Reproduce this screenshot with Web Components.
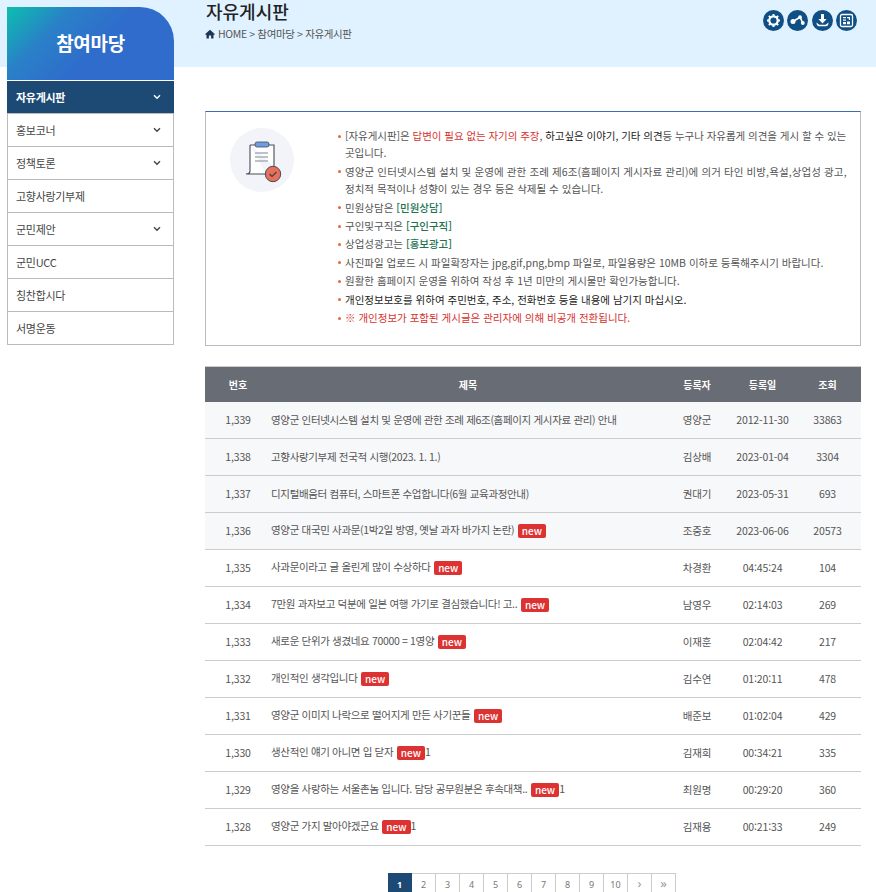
<!DOCTYPE html>
<html lang="ko">
<head>
<meta charset="utf-8">
<title>자유게시판</title>
<style>
  html, body { margin: 0; height: 892px; overflow: hidden; background: #fff; }
  body { font-family: "Noto Sans CJK KR", "Noto Sans", sans-serif; color: #444; }
</style>
</head>
<body>
<board-page>
  <side-menu slot="side" heading="참여마당">
    <side-item active arrow>자유게시판</side-item>
    <side-item arrow>홍보코너</side-item>
    <side-item arrow>정책토론</side-item>
    <side-item>고향사랑기부제</side-item>
    <side-item arrow>군민제안</side-item>
    <side-item>군민UCC</side-item>
    <side-item>칭찬합시다</side-item>
    <side-item>서명운동</side-item>
  </side-menu>

  <page-head heading="자유게시판" trail="HOME > 참여마당 > 자유게시판"></page-head>

  <notice-box>
    <li style="letter-spacing: -0.05px">[자유게시판]은 <span class="r">답변이 필요 없는 자기의 주장</span>, <span class="k">하고싶은 이야기, 기타 의견</span>등 누구나 자유롭게 의견을 게시 할 수 있는 곳입니다.</li>
    <li><span style="letter-spacing: 0.11px">영양군 인터넷시스템 설치 및 운영에 관한 조례 제6조(홈페이지 게시자료 관리)에 의거 타인 비방,욕설,상업성 광고,</span> 정치적 목적이나 성향이 있는 경우 등은 삭제될 수 있습니다.</li>
    <li>민원상담은 <span class="g">[민원상담]</span></li>
    <li>구인및구직은 <span class="g">[구인구직]</span></li>
    <li>상업성광고는 <span class="g">[홍보광고]</span></li>
    <li>사진파일 업로드 시 파일확장자는 jpg,gif,png,bmp 파일로, 파일용량은 10MB 이하로 등록해주시기 바랍니다.</li>
    <li>원활한 홈페이지 운영을 위하여 작성 후 1년 미만의 게시물만 확인가능합니다.</li>
    <li class="k">개인정보보호를 위하여 주민번호, 주소, 전화번호 등을 내용에 남기지 마십시오.</li>
    <li class="r">※ 개인정보가 포함된 게시글은 관리자에 의해 비공개 전환됩니다.</li>
  </notice-box>

  <board-table>
    <board-row notice no="1,339" who="영양군" day="2012-11-30" hits="33863">영양군 인터넷시스템 설치 및 운영에 관한 조례 제6조(홈페이지 게시자료 관리) 안내</board-row>
    <board-row notice no="1,338" who="김상배" day="2023-01-04" hits="3304">고향사랑기부제 전국적 시행(2023. 1. 1.)</board-row>
    <board-row notice no="1,337" who="권대기" day="2023-05-31" hits="693">디지털배움터 컴퓨터, 스마트폰 수업합니다(6월 교육과정안내)</board-row>
    <board-row notice no="1,336" who="조중호" day="2023-06-06" hits="20573">영양군 대국민 사과문(1박2일 방영, 옛날 과자 바가지 논란) <new-tag></new-tag></board-row>
    <board-row no="1,335" who="차경환" day="04:45:24" hits="104">사과문이라고 글 올린게 많이 수상하다 <new-tag></new-tag></board-row>
    <board-row no="1,334" who="남영우" day="02:14:03" hits="269">7만원 과자보고 덕분에 일본 여행 가기로 결심했습니다! 고.. <new-tag></new-tag></board-row>
    <board-row no="1,333" who="이재훈" day="02:04:42" hits="217">새로운 단위가 생겼네요 70000 = 1영양 <new-tag></new-tag></board-row>
    <board-row no="1,332" who="김수연" day="01:20:11" hits="478">개인적인 생각입니다 <new-tag></new-tag></board-row>
    <board-row no="1,331" who="배준보" day="01:02:04" hits="429">영양군 이미지 나락으로 떨어지게 만든 사기꾼들 <new-tag></new-tag></board-row>
    <board-row no="1,330" who="김재희" day="00:34:21" hits="335">생산적인 얘기 아니면 입 닫자 <new-tag></new-tag>1</board-row>
    <board-row no="1,329" who="최원명" day="00:29:20" hits="360">영양을 사랑하는 서울촌놈 입니다. 담당 공무원분은 후속대책.. <new-tag></new-tag>1</board-row>
    <board-row no="1,328" who="김재용" day="00:21:33" hits="249">영양군 가지 말아야겠군요 <new-tag></new-tag>1</board-row>
  </board-table>

  <page-nav pages="1,2,3,4,5,6,7,8,9,10,›,»" current="1"></page-nav>
</board-page>

<script>
class BoardPage extends HTMLElement {
  constructor() {
    super();
    this.attachShadow({ mode: 'open' });
    this.shadowRoot.innerHTML = `
      <style>
        :host {
          display: grid;
          grid-template-columns: 167px 656px;
          column-gap: 31px;
          padding: 7px 0 0 7px;
          height: 885px;
          overflow: hidden;
          background: linear-gradient(#e0f2ff 67px, #fff 67px);
        }
        main { display: block; margin-top: -7px; }
      </style>
      <slot name="side"></slot>
      <main><slot></slot></main>
    `;
  }
}

class SideMenu extends HTMLElement {
  constructor() {
    super();
    this.attachShadow({ mode: 'open' });
    this.shadowRoot.innerHTML = `
      <style>
        :host { display: block; }
        h2 {
          margin: 0 0 1px;
          height: 73px;
          line-height: 71px;
          text-align: center;
          color: #fff;
          font-size: 19px;
          font-weight: 700;
          letter-spacing: -0.3px;
          border-top-right-radius: 34px;
          background: linear-gradient(135deg, #0bbfae 0%, #2a80c8 28%, #2f6ccb 55%, #2f6ccb 100%);
        }
        div { border-bottom: 1px solid #bbb; }
        ::slotted(side-item:first-child) { height: 32px; }
      </style>
      <h2></h2>
      <div><slot></slot></div>
    `;
    this.shadowRoot.querySelector('h2').textContent = this.getAttribute('heading');
  }
}

class SideItem extends HTMLElement {
  constructor() {
    super();
    this.attachShadow({ mode: 'open' });
    this.shadowRoot.innerHTML = `
      <style>
        :host {
          display: flex;
          align-items: center;
          justify-content: space-between;
          box-sizing: border-box;
          height: 33px;
          padding: 0 12px 0 8px;
          border: 1px solid #bbb;
          border-bottom: 0;
          font-size: 11px;
          letter-spacing: -0.3px;
          color: #444;
          background: #fff;
        }
        :host([active]) {
          padding-bottom: 2px;
          background: #1c4a75;
          border-color: #1c4a75;
          color: #fff;
          font-weight: 700;
        }
        svg { display: none; width: 8px; height: 6px; fill: none; stroke: currentColor; stroke-width: 1.4; }
        :host([arrow]) svg { display: block; }
      </style>
      <span><slot></slot></span>
      <svg viewBox="0 0 8 6"><path d="M1 1.2 4 4.2 7 1.2"/></svg>
    `;
  }
}

class PageHead extends HTMLElement {
  constructor() {
    super();
    this.attachShadow({ mode: 'open' });
    this.shadowRoot.innerHTML = `
      <style>
        :host { display: flex; justify-content: space-between; height: 111px; padding: 0 4px 0 1px; box-sizing: border-box; }
        h1 { margin: 0; font-size: 18px; font-weight: 500; line-height: 22px; color: #222; }
        p { margin: 4px 0 0 -1px; display: flex; align-items: center; gap: 3px; font-size: 10.5px; line-height: 16px; color: #555; letter-spacing: -0.36px; }
        .home { width: 10px; height: 10px; fill: #1c3552; }
        .tools { display: flex; gap: 3.5px; margin-top: 10px; }
        .tools svg { width: 21px; height: 21px; display: block; }
      </style>
      <div>
        <h1></h1>
        <p><svg class="home" viewBox="0 0 10 10"><path d="M5 .8 .3 5v.8h1.2V9.6h2.4V6.6h2.2v3h2.4V5.8h1.2V5z"/></svg><span></span></p>
      </div>
      <div class="tools">
        <svg viewBox="0 0 21 21"><circle cx="10.5" cy="10.5" r="10.5" fill="#0f4f85"/><circle cx="10.5" cy="10.5" r="4.2" fill="none" stroke="#fff" stroke-width="2.2"/><path d="M10.5 4v2.4M10.5 14.6V17M4 10.500h2.400M14.600 10.500H17M5.900 5.900l1.700 1.700M13.400 13.400l1.700 1.700M5.900 15.100l1.700-1.700M13.400 7.600l1.700-1.700" stroke="#fff" stroke-width="2"/></svg>
        <svg viewBox="0 0 21 21"><circle cx="10.5" cy="10.5" r="10.5" fill="#0f4f85"/><path d="M6 11.500 13 7.200 15.800 13" fill="none" stroke="#fff" stroke-width="1.600"/><circle cx="6" cy="11.500" r="2.500" fill="#fff"/><circle cx="13" cy="7.200" r="1.900" fill="#fff"/><circle cx="15.800" cy="13" r="1.900" fill="#fff"/></svg>
        <svg viewBox="0 0 21 21"><circle cx="10.5" cy="10.5" r="10.5" fill="#0f4f85"/><path d="M9 4h3v5h2.600l-4.100 4.600L6.400 9H9z" fill="#fff"/><path d="M4.500 12.500c0 2.500 1 3.800 2.500 3.800h7c1.500 0 2.500-1.300 2.500-3.800l-1.800 1.500c-.4.600-.8.800-1.400.8H7.700c-.6 0-1-.2-1.400-.8z" fill="#fff"/></svg>
        <svg viewBox="0 0 21 21"><circle cx="10.500" cy="10.500" r="10.500" fill="#0f4f85"/><rect x="4.500" y="4.500" width="12" height="12" rx="1.500" fill="none" stroke="#fff" stroke-width="1.300"/><path d="M7 7h3v1.200H7zM11 7h3v3h-1.200V8.200H11zM7 9.500h3v1.200H7zM7 12h3v2.200H7zM11 11.500h3v2.700h-3z" fill="#fff"/></svg>
      </div>
    `;
    this.shadowRoot.querySelector('h1').textContent = this.getAttribute('heading');
    this.shadowRoot.querySelector('p span').textContent = this.getAttribute('trail');
  }
}

class NoticeBox extends HTMLElement {
  constructor() {
    super();
    this.attachShadow({ mode: 'open' });
    this.shadowRoot.innerHTML = `
      <style>
        :host {
          display: grid;
          grid-template-columns: 64px 1fr;
          column-gap: 44px;
          box-sizing: border-box;
          height: 235px;
          margin-bottom: 20px;
          padding: 15px 10px 0 24px;
          border: 1px solid #bbb;
          border-top-color: #3a6cb0;
          background: #fff;
        }
        svg { width: 64px; height: 64px; display: block; margin-top: 1px; }
        ul { margin: 0; padding: 0; list-style: none; }
        ::slotted(li) {
          position: relative;
          padding-left: 7px;
          font-size: 10.500px;
          line-height: 17.400px;
          margin-bottom: 1px;
          color: #555;
        }
      </style>
      <svg viewBox="0 0 64 64">
        <circle cx="32" cy="32" r="32" fill="#f3f4f9"/>
        <path d="M20 17h24v21M36 46H16c2 0 4-1 4-3V17" fill="#fff" stroke="#444c5a" stroke-width="1.100"/>
        <rect x="25" y="14" width="14" height="5" rx="2" fill="#6f9ee0" stroke="#444c5a" stroke-width=".8"/>
        <path d="M25 25h13M25 29h13M25 33h13" stroke="#a9adb5" stroke-width="1.400"/>
        <circle cx="43" cy="46" r="7.700" fill="#e8705a" stroke="#444c5a" stroke-width="1"/>
        <path d="M39.500 46l2.500 2.500 4.500-4.500" fill="none" stroke="#3d3f48" stroke-width="1.200"/>
      </svg>
      <ul><slot></slot></ul>
    `;
  }
}

const COLS = '66px 394px 64px 67px 63px';

class BoardTable extends HTMLElement {
  constructor() {
    super();
    this.attachShadow({ mode: 'open' });
    this.shadowRoot.innerHTML = `
      <style>
        :host { display: block; }
        header {
          display: grid;
          grid-template-columns: ${COLS};
          align-items: center;
          box-sizing: border-box;
          height: 36px;
          border-top: 1px solid #ccc;
          text-align: center;
          font-size: 10px;
          font-weight: 700;
          color: #fff;
          background: #686c75;
        }
      </style>
      <header><span>번호</span><span>제목</span><span>등록자</span><span>등록일</span><span>조회</span></header>
      <slot></slot>
    `;
  }
}

class BoardRow extends HTMLElement {
  constructor() {
    super();
    this.attachShadow({ mode: 'open' });
    this.shadowRoot.innerHTML = `
      <style>
        :host {
          display: grid;
          grid-template-columns: ${COLS};
          align-items: center;
          box-sizing: border-box;
          height: 37px;
          padding-bottom: 2px;
          border-bottom: 1px solid #ccc;
          font-size: 10.500px;
          letter-spacing: -0.15px;
          color: #555;
          text-align: center;
          background: #fff;
        }
        :host([notice]) { background: #f7f8fa; }
        .title { text-align: left; white-space: nowrap; letter-spacing: -0.34px; }
      </style>
      <span class="no"></span>
      <span class="title"><slot></slot></span>
      <span class="who"></span>
      <span class="day"></span>
      <span class="hits"></span>
    `;
    for (const k of ['no', 'who', 'day', 'hits']) {
      this.shadowRoot.querySelector('.' + k).textContent = this.getAttribute(k);
    }
  }
}

class NewTag extends HTMLElement {
  constructor() {
    super();
    this.attachShadow({ mode: 'open' });
    this.shadowRoot.innerHTML = `
      <style>
        :host {
          display: inline-block;
          margin-left: 1px;
          padding: 0 4px;
          height: 14px;
          line-height: 13px;
          font-size: 10px;
          font-weight: 500;
          color: #fff;
          background: #dc3232;
          border-radius: 2px;
          vertical-align: -1px;
          letter-spacing: 0;
        }
      </style>new
    `;
  }
}

class PageNav extends HTMLElement {
  constructor() {
    super();
    this.attachShadow({ mode: 'open' });
    const cur = this.getAttribute('current');
    const cells = this.getAttribute('pages').split(',')
      .map(p => `<a class="${p === cur ? 'on' : ''}">${p}</a>`).join('');
    this.shadowRoot.innerHTML = `
      <style>
        :host { display: flex; justify-content: center; margin-top: 27px; padding-right: 2px; }
        a {
          box-sizing: border-box;
          width: 24px;
          height: 24px;
          line-height: 21px;
          text-align: center;
          font-size: 9px;
          color: #777;
          border: 1px solid #ccc;
          border-left: 0;
          font-family: "Noto Sans", sans-serif;
        }
        a:last-child, a:nth-last-child(2) { font-size: 13px; line-height: 18px; color: #999; }
        a.on { background: #1c4a75; border-color: #1c4a75; color: #fff; font-weight: 700; }
      </style>
      ${cells}
    `;
  }
}

customElements.define('board-page', BoardPage);
customElements.define('side-menu', SideMenu);
customElements.define('side-item', SideItem);
customElements.define('page-head', PageHead);
customElements.define('notice-box', NoticeBox);
customElements.define('board-table', BoardTable);
customElements.define('board-row', BoardRow);
customElements.define('new-tag', NewTag);
customElements.define('page-nav', PageNav);
</script>
<style>
  notice-box .r { color: #d6332f; }
  notice-box .k { color: #222; }
  notice-box .g { color: #23724f; font-weight: 500; }
  notice-box li::before { content: ""; position: absolute; left: 0; top: 7.500px; width: 3px; height: 3px; border-radius: 50%; background: #e8663a; }
</style>
</body>
</html>
